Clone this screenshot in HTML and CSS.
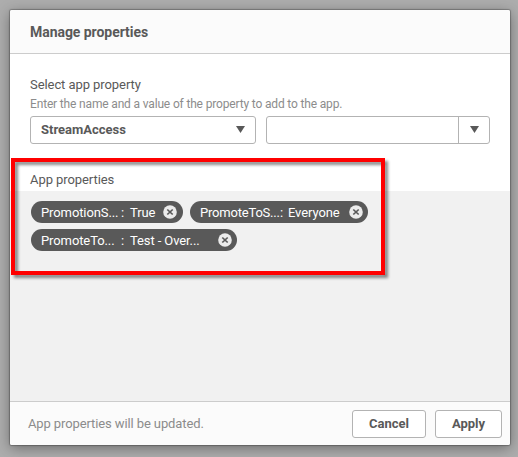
FILE: index.html
```html
<!DOCTYPE html>
<html lang="en">
<head>
<meta charset="utf-8">
<title>Manage properties</title>
<link rel="stylesheet" href="styles.css">
</head>
<body>
<div class="dialog">
  <header class="header"><h1 class="title">Manage properties</h1></header>
  <main class="content">
    <div class="label"><span class="select-label">Select app property</span></div>
    <div class="hint"><span>Enter the name and a value of the property to add to the app.</span></div>
    <div class="fields">
      <div class="select"><span class="select-value">StreamAccess</span><svg class="arrow" viewBox="0 0 9 7"><path d="M0 0h9L4.5 7z"/></svg></div>
      <div class="combo"><div class="combo-input"></div><div class="combo-toggle"><svg class="arrow" viewBox="0 0 9 7"><path d="M0 0h9L4.5 7z"/></svg></div></div>
    </div>
    <div class="label props-label"><span>App properties</span></div>
  </main>
  <section class="chips">
    <div class="chip chip-true"><span class="name">PromotionS...</span><span class="colon">:</span><span class="value">True</span><svg class="remove" viewBox="0 0 14 14"><circle cx="7" cy="7" r="6.8"/><path d="M4.3 4.5l5.4 5M9.7 4.5l-5.4 5"/></svg></div>
    <div class="chip chip-everyone"><span class="name name-s">PromoteToS...</span><span class="colon">:</span><span class="value">Everyone</span><svg class="remove" viewBox="0 0 14 14"><circle cx="7" cy="7" r="6.8"/><path d="M4.3 4.5l5.4 5M9.7 4.5l-5.4 5"/></svg></div>
    <div class="chip chip-test"><span class="name">PromoteTo...</span><span class="colon">:</span><span class="value">Test - Over...</span><svg class="remove" viewBox="0 0 14 14"><circle cx="7" cy="7" r="6.8"/><path d="M4.3 4.5l5.4 5M9.7 4.5l-5.4 5"/></svg></div>
  </section>
  <footer class="footer">
    <span class="status">App properties will be updated.</span>
    <button class="button cancel">Cancel</button>
    <button class="button apply">Apply</button>
  </footer>
  <div class="highlight"></div>
</div>
</body>
</html>
```

FILE: styles.css
```css
* { box-sizing: border-box; }
body {
  margin: 0;
  height: 457px;
  padding: 10px 8px 12px 10px;
  overflow: hidden;
  background: #adadad;
  font-family: Roboto, "Liberation Sans", sans-serif;
  font-size: 13px;
  color: #595959;
}
.dialog {
  position: relative;
  display: flex;
  flex-direction: column;
  height: 435px;
  border-radius: 2px;
  background: #fff;
  box-shadow: 0 0 1px 1px rgba(0,0,0,.25), 0 3px 14px rgba(0,0,0,.38);
}
.header {
  height: 44px;
  padding: 0 20px;
  border-bottom: 1px solid #ccc;
  border-radius: 2px 2px 0 0;
  background: #fbfbfb;
}
.title {
  margin: 0;
  font-size: 14px;
  line-height: 45px;
  font-weight: 700;
  letter-spacing: -.05px;
}
.content { height: 137px; padding: 21px 20px 0; }
.label { height: 20px; line-height: 20px; font-size: 13px; letter-spacing: -.07px; white-space: nowrap; }
.hint { height: 21px; line-height: 17px; font-size: 12px; letter-spacing: -.16px; color: #8c8c8c; white-space: nowrap; padding-top: 1px; }
.fields { display: flex; gap: 10px; height: 28px; }
.select, .combo { display: flex; height: 28px; border: 1px solid #b3b3b3; border-radius: 3px; background: #fff; }
.select { width: 226px; align-items: center; justify-content: space-between; padding: 0 10px; font-weight: 700; }
.select-value { margin-bottom: 2px; }
.combo { width: 224px; }
.combo-input { flex: 1; }
.combo-toggle { display: flex; width: 31px; align-items: center; justify-content: center; border-left: 1px solid #b3b3b3; }
.arrow { width: 9px; height: 7px; margin-bottom: 1px; fill: #595959; }
.props-label { margin-top: 26px; }
.chips {
  display: flex;
  flex: 1;
  flex-wrap: wrap;
  align-content: flex-start;
  gap: 6px 7px;
  padding: 10px 21px;
  background: #f1f1f1;
}
.chip {
  display: flex;
  align-items: center;
  height: 22px;
  padding: 0 6px 0 10px;
  border-radius: 11px;
  background: #595959;
  color: #fff;
  letter-spacing: -.1px;
  white-space: nowrap;
}
.chip-true { width: 152px; }
.chip-everyone { width: 178px; padding-right: 5px; }
.chip-test { width: 206px; padding-right: 5px; }
.name { width: 80px; }
.name-s { letter-spacing: -.2px; }
.colon { width: 9px; }
.chip-everyone .colon { width: 8px; }
.remove { width: 14px; height: 14px; margin-left: auto; fill: #ebebeb; }
.remove path { stroke: #595959; stroke-width: 1.7; }
.footer {
  display: flex;
  align-items: center;
  height: 44px;
  padding: 0 8px 0 18px;
  border-top: 1px solid #ccc;
  border-radius: 0 0 2px 2px;
  background: #fbfbfb;
}
.status { flex: 1; color: #8c8c8c; letter-spacing: -.11px; }
.button {
  height: 28px;
  padding: 0;
  border: 1px solid #b3b3b3;
  border-radius: 3px;
  background: #fff;
  color: #595959;
  font: 700 13px Roboto, sans-serif;
}
.cancel { width: 74px; margin-right: 9px; }
.apply { width: 67px; }
.highlight {
  position: absolute;
  left: 1px;
  top: 148px;
  width: 374px;
  height: 117px;
  border: 4px solid #f00;
  filter: drop-shadow(3px 3px 1.5px rgba(0,0,0,.45));
}
```
